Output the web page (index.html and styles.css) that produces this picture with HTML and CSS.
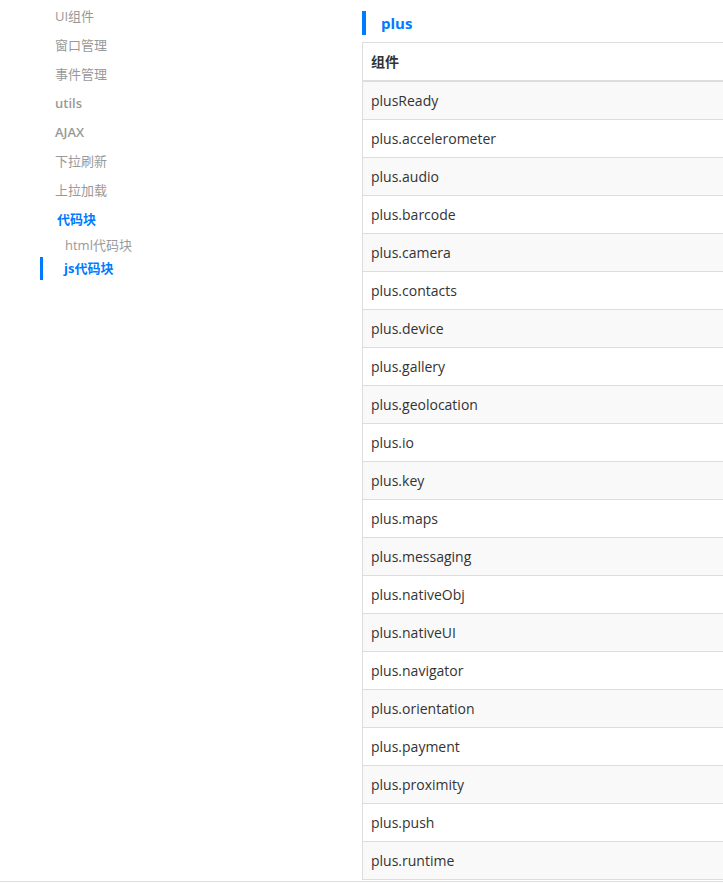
FILE: index.html
```html
<!DOCTYPE html>
<html lang="zh-CN">
<head>
<meta charset="utf-8">
<title>plus</title>
<link rel="stylesheet" href="styles.css">
</head>
<body>
<div class="page">
  <nav class="nav">
    <ul class="menu">
      <li class="item">UI组件</li>
      <li class="item">窗口管理</li>
      <li class="item">事件管理</li>
      <li class="item latin">utils</li>
      <li class="item latin">AJAX</li>
      <li class="item">下拉刷新</li>
      <li class="item">上拉加载</li>
      <li class="item open">代码块
        <ul class="sub">
          <li class="sub-item">html代码块</li>
          <li class="sub-item active">js代码块</li>
        </ul>
      </li>
    </ul>
  </nav>
  <main class="main">
    <h2 class="title">plus</h2>
    <div class="table">
      <div class="row head">组件</div>
      <div class="row">plusReady</div>
      <div class="row">plus.accelerometer</div>
      <div class="row">plus.audio</div>
      <div class="row">plus.barcode</div>
      <div class="row">plus.camera</div>
      <div class="row">plus.contacts</div>
      <div class="row">plus.device</div>
      <div class="row">plus.gallery</div>
      <div class="row">plus.geolocation</div>
      <div class="row">plus.io</div>
      <div class="row">plus.key</div>
      <div class="row">plus.maps</div>
      <div class="row">plus.messaging</div>
      <div class="row">plus.nativeObj</div>
      <div class="row">plus.nativeUI</div>
      <div class="row">plus.navigator</div>
      <div class="row">plus.orientation</div>
      <div class="row">plus.payment</div>
      <div class="row">plus.proximity</div>
      <div class="row">plus.push</div>
      <div class="row">plus.runtime</div>
    </div>
  </main>
</div>
<div class="bottom-line"></div>
</body>
</html>
```
FILE: styles.css
```css
html, body {
  margin: 0;
  padding: 0;
  overflow: hidden;
  background: #fff;
  font-family: "Open Sans", "Noto Sans CJK SC", sans-serif;
}
.page {
  display: flex;
  width: 100%;
}
.nav {
  width: 362px;
  flex: none;
}
.menu, .sub {
  list-style: none;
  margin: 0;
  padding: 0;
}
.menu {
  padding-top: 2px;
}
.item {
  padding-left: 55px;
  font-size: 13px;
  line-height: 29px;
  color: #999;
}
.item.latin {
  font-weight: 600;
}
.item.open {
  padding-left: 0;
  text-indent: 57px;
  color: #007aff;
  font-weight: 700;
}
.sub {
  text-indent: 0;
  margin-left: 40px;
}
.sub-item {
  border-left: 3px solid transparent;
  padding-left: 22px;
  font-size: 13px;
  line-height: 23px;
  font-weight: 400;
  color: #999;
}
.sub-item.active {
  border-left-color: #007aff;
  padding-left: 21px;
  color: #007aff;
  font-weight: 700;
}
.main {
  flex: 1;
  min-width: 0;
  overflow: hidden;
  padding-top: 11px;
}
.title {
  margin: 0 0 7px;
  height: 24px;
  line-height: 24px;
  border-left: 4px solid #007aff;
  padding-left: 15px;
  font-size: 15px;
  font-weight: 700;
  color: #007aff;
}
.table {
  width: 600px;
  border: 1px solid #ddd;
}
.row {
  height: 37px;
  line-height: 37px;
  padding: 0 8px;
  font-size: 14px;
  color: #333;
  border-bottom: 1px solid #ddd;
}
.row:last-child {
  border-bottom: 0;
}
.row.head {
  font-weight: 700;
  border-bottom: 2px solid #ddd;
}
.row:nth-child(even) {
  background: #f9f9f9;
}
.bottom-line {
  margin-top: 1px;
  border-top: 1px solid #ddd;
  height: 10px;
}
```
